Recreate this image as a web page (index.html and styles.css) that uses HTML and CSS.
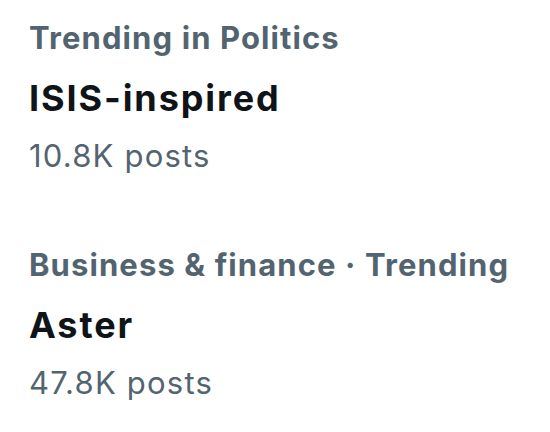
FILE: index.html
```html
<!DOCTYPE html>
<html lang="en">
<head>
<meta charset="utf-8">
<title>Trends</title>
<link rel="stylesheet" href="styles.css">
</head>
<body>
<main class="trends">
  <section class="trend">
    <div class="trend-meta">Trending in Politics</div>
    <div class="trend-name">ISIS-inspired</div>
    <div class="trend-count">10.8K posts</div>
  </section>
  <section class="trend">
    <div class="trend-meta">Business &amp; finance · Trending</div>
    <div class="trend-name">Aster</div>
    <div class="trend-count">47.8K posts</div>
  </section>
</main>
</body>
</html>
```

FILE: styles.css
```css
html, body {
  margin: 0;
  background: #ffffff;
}

body {
  font-family: Inter, "Noto Sans", "Liberation Sans", sans-serif;
  padding-top: 18px;
}

.trends {
  display: flex;
  flex-direction: column;
  gap: 69px;
}

.trend {
  display: flex;
  flex-direction: column;
  padding: 0 29px;
}

.trend-meta {
  font-size: 31px;
  line-height: 40px;
  font-weight: 700;
  letter-spacing: 1.1px;
  color: #536471;
}

.trend-name {
  font-size: 36px;
  line-height: 46px;
  font-weight: 700;
  letter-spacing: 1.9px;
  color: #0f1419;
  margin-top: 17px;
}

.trend-count {
  font-size: 31px;
  line-height: 40px;
  font-weight: 400;
  letter-spacing: 1.2px;
  color: #536471;
  margin-top: 15px;
}
```
